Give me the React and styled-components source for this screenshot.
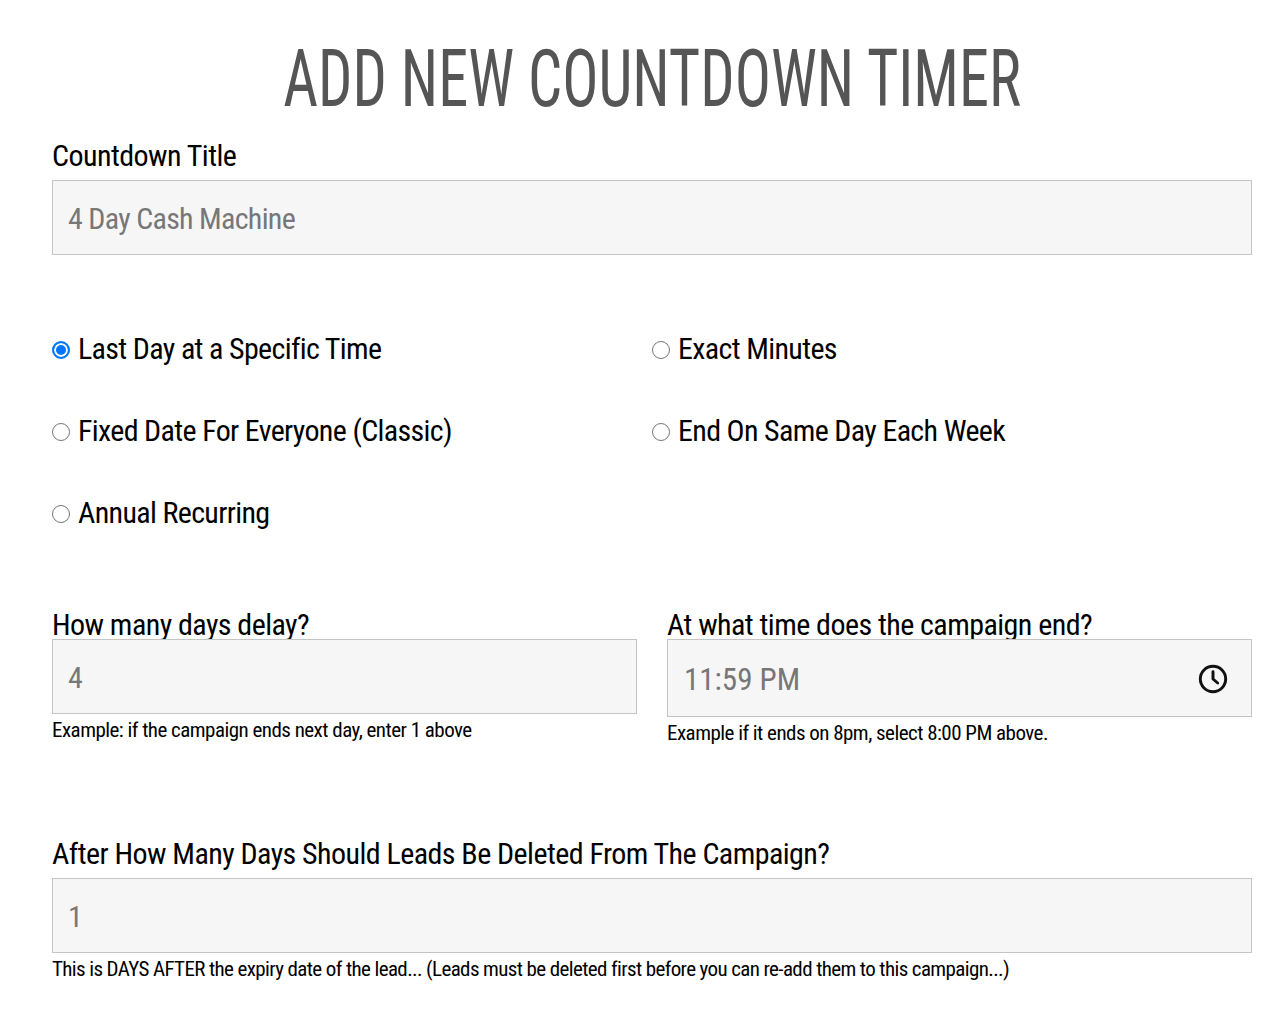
import React from "react";
import styled, { createGlobalStyle } from "styled-components";

const Global = createGlobalStyle`
  body {
    margin: 0;
    background: #fff;
    font-family: "Liberation Sans Narrow", "Roboto Condensed", "Liberation Sans", sans-serif;
  }
`;

const Page = styled.div`
  width: 1281px;
  height: 1033px;
  box-sizing: border-box;
  padding: 0 29px 0 52px;
`;

const Title = styled.h1`
  margin: 0;
  padding-top: 39px;
  height: 138px;
  box-sizing: border-box;
  font-size: 80px;
  line-height: 80px;
  font-weight: 400;
  color: #555;
  text-align: center;
  white-space: nowrap;
`;

const TitleText = styled.span`
  display: inline-block;
  transform: scaleX(0.754);
`;

const Label = styled.label`
  display: block;
  height: ${(p) => (p.$compact ? 33 : 42)}px;
  font-size: 30px;
  line-height: ${(p) => (p.$compact ? 38 : 36)}px;
  letter-spacing: -0.55px;
  color: #000;
  white-space: nowrap;
`;

const Input = styled.div`
  position: relative;
  display: flex;
  align-items: center;
  justify-content: space-between;
  box-sizing: border-box;
  height: ${(p) => p.$h || 75}px;
  padding: 1px 22px 0 ${(p) => (p.$time ? 16 : 15)}px;
  background: #f6f6f6;
  border: 1px solid #c4c4c4;
  font-size: ${(p) => (p.$time ? 31 : 30)}px;
  letter-spacing: ${(p) => (p.$time ? 0 : -0.7)}px;
  color: #777;
`;

const TimeValue = styled.span`
  margin-top: 2px;
`;

const Radios = styled.div`
  display: grid;
  grid-template-columns: 600px 600px;
  grid-auto-rows: 82px;
  margin-top: 54px;
`;

const Radio = styled.label`
  display: flex;
  align-items: center;
  gap: 8px;
  height: 82px;
  font-size: 30px;
  letter-spacing: -0.65px;
  color: #000;
`;

const RadioText = styled.span`
  margin-bottom: 4px;
`;

const Dot = styled.span`
  box-sizing: border-box;
  width: 18px;
  height: 18px;
  border-radius: 50%;
  border: ${(p) => (p.$on ? "2px solid #0075ff" : "1.5px solid #767676")};
  background: ${(p) => (p.$on ? "#0075ff" : "#fff")};
  box-shadow: ${(p) => (p.$on ? "inset 0 0 0 2px #fff" : "none")};
`;

const Columns = styled.div`
  display: grid;
  grid-template-columns: 585px 585px;
  gap: 30px;
  margin-top: 51px;
`;

const Hint = styled.p`
  margin: 3px 0 0;
  font-size: 21px;
  line-height: 26px;
  letter-spacing: ${(p) => (p.$tight ? -0.62 : -0.53)}px;
  color: #000;
  white-space: nowrap;
`;

const Section = styled.div`
  margin-top: ${(p) => p.$top}px;
`;

const Clock = () => (
  <svg width="32" height="32" viewBox="0 0 24 24" fill="none" stroke="#111" strokeWidth="2.2" strokeLinecap="round" strokeLinejoin="round">
    <circle cx="12" cy="12" r="9.5" />
    <path d="M12 6.5V12l3.5 3" />
  </svg>
);

const options = [
  { label: "Last Day at a Specific Time", on: true },
  { label: "Exact Minutes" },
  { label: "Fixed Date For Everyone (Classic)" },
  { label: "End On Same Day Each Week" },
  { label: "Annual Recurring" },
];

export default function App() {
  return (
    <Page>
      <Global />
      <Title><TitleText>ADD NEW COUNTDOWN TIMER</TitleText></Title>
      <Label>Countdown Title</Label>
      <Input>4 Day Cash Machine</Input>
      <Radios>
        {options.map((o) => (
          <Radio key={o.label}>
            <Dot $on={o.on} />
            <RadioText>{o.label}</RadioText>
          </Radio>
        ))}
      </Radios>
      <Columns>
        <div>
          <Label $compact>How many days delay?</Label>
          <Input>4</Input>
          <Hint>Example: if the campaign ends next day, enter 1 above</Hint>
        </div>
        <div>
          <Label $compact>At what time does the campaign end?</Label>
          <Input $h={78} $time><TimeValue>11:59 PM</TimeValue><Clock /></Input>
          <Hint>Example if it ends on 8pm, select 8:00 PM above.</Hint>
        </div>
      </Columns>
      <Section $top={90}>
        <Label>After How Many Days Should Leads Be Deleted From The Campaign?</Label>
        <Input>1</Input>
        <Hint $tight>This is DAYS AFTER the expiry date of the lead... (Leads must be deleted first before you can re-add them to this campaign...)</Hint>
      </Section>
    </Page>
  );
}
